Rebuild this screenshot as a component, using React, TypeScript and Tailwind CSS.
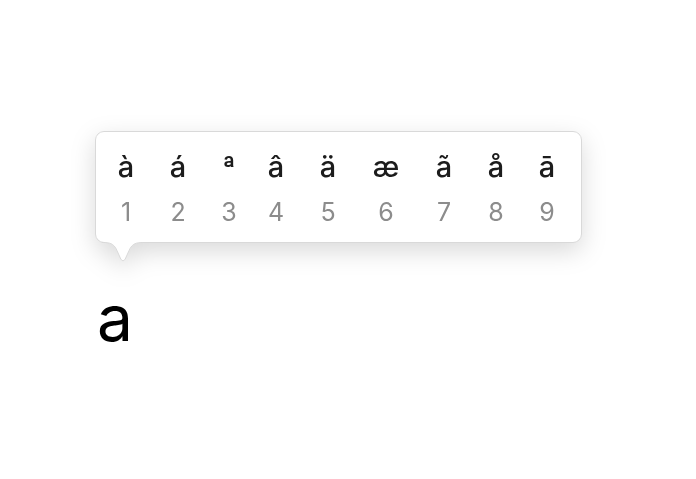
const accents = [
  { ch: "à", n: "1", w: "w-[52px]" },
  { ch: "á", n: "2", w: "w-[52px]" },
  { ch: "ª", n: "3", w: "w-[50px]" },
  { ch: "â", n: "4", w: "w-[44px]" },
  { ch: "ä", n: "5", w: "w-[60px]" },
  { ch: "æ", n: "6", w: "w-[56px]" },
  { ch: "ã", n: "7", w: "w-[60px]" },
  { ch: "å", n: "8", w: "w-[44px]" },
  { ch: "ā", n: "9", w: "w-[58px]" },
];

const App = () => {
  return (
    <div className="min-h-[479px] w-full bg-white font-['Inter',sans-serif]">
      <div className="pt-[131px] pl-[95px]">
        <div className="relative w-[487px] drop-shadow-[0_8px_12px_rgba(0,0,0,0.15)]">
          <div className="flex h-[112px] rounded-[9px] border border-[#d9d9d9] bg-white pl-[4px]">
            {accents.map((a) => (
              <div key={a.n} className={`flex flex-col items-center ${a.w}`}>
                <span className="mt-[18px] text-[29px] leading-[34px] font-medium text-[#1c1c1c]">
                  {a.ch}
                </span>
                <span className="mt-[14px] text-[25px] leading-[28px] text-[#8c8c8c]">
                  {a.n}
                </span>
              </div>
            ))}
          </div>
          <svg
            className="absolute top-[111px] left-[7px]"
            width="42"
            height="22"
            viewBox="0 0 42 22"
          >
            <path
              d="M0 0.5 C9 0.5 11 2 14 6.5 L19 17.5 Q21 20.5 23 17.5 L28 6.5 C31 2 33 0.5 42 0.5 L42 0 L0 0 Z"
              fill="#ffffff"
            />
            <path
              d="M0 0.5 C9 0.5 11 2 14 6.5 L19 17.5 Q21 20.5 23 17.5 L28 6.5 C31 2 33 0.5 42 0.5"
              fill="none"
              stroke="#d9d9d9"
              strokeWidth="1"
            />
          </svg>
        </div>
      </div>
      <div className="mt-[43px] pl-[97px] text-[64px] leading-[64px] text-black">
        a
      </div>
    </div>
  );
};

export default App;
